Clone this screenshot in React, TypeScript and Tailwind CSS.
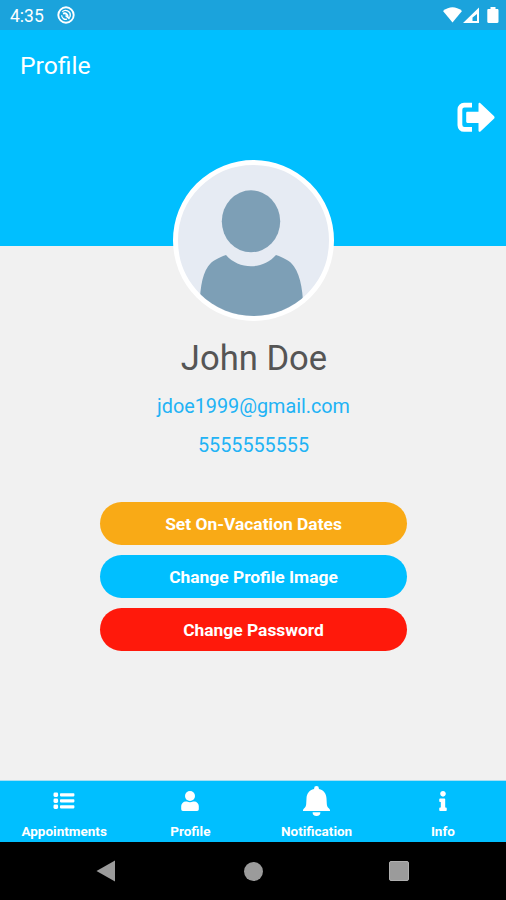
import React from 'react';
import { FaInfo } from 'react-icons/fa';

const ListIcon = () => (
  <svg width="22" height="18" viewBox="0 0 22 18" fill="currentColor">
    {[0.6, 6.6, 12.6].map((y) => (
      <g key={y}>
        <rect x="0.5" y={y} width="4.6" height="4.4" rx="1.4" />
        <rect x="7" y={y + 0.6} width="14.4" height="3.2" rx="0.8" />
      </g>
    ))}
  </svg>
);

const UserIcon = () => (
  <svg width="18" height="20" viewBox="0 0 18 20" fill="currentColor">
    <circle cx="9" cy="5" r="5" />
    <path d="M4.700 10.600h1.200a7 7 0 0 0 6.200 0h1.200a4.500 4.500 0 0 1 4.500 4.500v3.200A1.700 1.700 0 0 1 16.100 20H1.900A1.700 1.700 0 0 1 .2 18.300v-3.200a4.500 4.500 0 0 1 4.500-4.500z" />
  </svg>
);

const BellIcon = () => (
  <svg width="27" height="30" viewBox="0 0 27 30" fill="currentColor">
    <path d="M13.5 0a2.4 2.4 0 0 0-2.4 2.400v.6C6 4.200 3.700 8 3.500 12.500L3.200 18c-.1 2-.8 3.200-2 4.200C.5 22.800 0 23.400 0 24.200V25h27v-.8c0-.8-.5-1.400-1.200-2-1.200-1-1.900-2.200-2-4.200l-.3-5.500C23.300 8 21 4.200 15.900 3v-.6A2.400 2.400 0 0 0 13.500 0z" />
    <path d="M9.600 26.200h7.800a3.900 3.800 0 0 1-7.800 0z" />
  </svg>
);

const tabs = [
  { label: 'Appointments', icon: <ListIcon /> },
  { label: 'Profile', icon: <UserIcon /> },
  { label: 'Notification', icon: <BellIcon /> },
  { label: 'Info', icon: <FaInfo size={20} /> },
];

const StatusBar = () => (
  <div className="flex h-[30px] items-center justify-between bg-[#1ba3dc] pl-[10px] pr-[7px] text-white">
    <div className="flex items-center gap-[13px] pt-0.5">
      <span className="text-[17.5px] leading-5">4:35</span>
      <svg className="mb-0.5" width="18" height="18" viewBox="0 0 18 18" fill="none" stroke="currentColor">
        <circle cx="9" cy="9" r="7.700" strokeWidth="1.900" />
        <path d="M5.300 5.800c3-2.800 8.400-.7 8 3.700-.1 1-.5 1.700-1 2.200" strokeWidth="1.300" />
        <path d="M4.600 9.300c.2 3 2.700 4.500 5.400 3.900" strokeWidth="1.300" />
        <path d="M6 7.600c2.700-1.100 5 .7 4.800 4" strokeWidth="1.800" />
        <path d="M8.500 9.500l4 3.400" strokeWidth="1.500" />
      </svg>
    </div>
    <svg width="56" height="18" viewBox="0 0 56 18" fill="currentColor">
      <path d="M0 5Q9.500-2.500 19 5L9.500 16.500z" />
      <path fillRule="evenodd" d="M36 1.500v15.500H20zM34 8L29.500 11.500V15h4.500z" />
      <path d="M45.500 3h2V1h5v2h1.800c.7 0 1.200.5 1.200 1.200v11.600c0 .7-.5 1.200-1.200 1.200h-8.800c-.7 0-1.200-.5-1.200-1.200V4.200c0-.7.5-1.200 1.200-1.200z" />
    </svg>
  </div>
);

const Avatar = () => (
  <div className="h-[161px] w-[161px] overflow-hidden rounded-full border-[5px] border-white bg-[#e6ebf3]">
    <svg width="151" height="151" viewBox="0 0 151 151" fill="#7d9fb6">
      <ellipse cx="73" cy="56.300" rx="29.200" ry="31" />
      <path d="M21.500 151c0-25 2-40 8.500-49.500 4-6 10-8.500 18-11.500 13 15 37 15 50 0 8 3 14 5.500 18 11.500 7 10 9.500 27 9.500 49.500z" />
    </svg>
  </div>
);

export default function App() {
  return (
    <div className="flex h-[900px] w-[506px] flex-col overflow-hidden bg-[#f1f1f1] font-['Roboto',sans-serif]">
      <StatusBar />

      <header className="h-[216px] shrink-0 bg-[#00bfff] text-white">
        <h1 className="pl-5 pt-[21px] text-[24.7px] leading-[30px]">Profile</h1>
        <div className="flex justify-end pr-[11px] pt-[21px]">
          <button type="button" aria-label="Log out">
            <svg className="block" width="38" height="31" viewBox="0 0 38 31" fill="currentColor">
              <path d="M15 .800H7A6.500 6.500 0 0 0 .500 7.300v16A6.500 6.500 0 0 0 7 29.800h8v-4.800H7.500A2.200 2.200 0 0 1 5.300 22.800V7.800a2.200 2.200 0 0 1 2.200-2.200H15z" />
              <path d="M10.500 9.700h11V2.300c0-1.500 1.200-1.900 2.200-.9l13.200 12.500c.9.900.9 2 0 2.800L23.700 29.300c-1 1-2.200.5-2.200-.9v-7.500h-11c-.8 0-1.300-.5-1.300-1.300V11c0-.8.5-1.300 1.300-1.300z" />
            </svg>
          </button>
        </div>
      </header>

      <main className="flex grow flex-col items-center">
        <div className="-mt-[86px] pl-px">
          <Avatar />
        </div>
        <h2 className="mt-4 pl-0.5 text-[34.6px] leading-[42px] text-[#555555]">John Doe</h2>
        <p className="mt-4 pl-px text-[19.8px] leading-6 text-[#22b3f5]">jdoe1999@gmail.com</p>
        <p className="mt-[15px] pl-px text-[19.8px] leading-6 text-[#22b3f5]">5555555555</p>

        <div className="mt-11 flex w-[307px] flex-col gap-[10px] text-[17.4px] font-bold text-white">
          <button type="button" className="h-[43px] rounded-full bg-[#f9aa16] pl-px pt-0.5">Set On-Vacation Dates</button>
          <button type="button" className="h-[43px] rounded-full bg-[#00bfff] pl-px pt-0.5">Change Profile Image</button>
          <button type="button" className="h-[43px] rounded-full bg-[#ff190b] pl-px pt-0.5">Change Password</button>
        </div>
      </main>

      {/* Bottom tabs */}
      <nav className="grid h-[62px] shrink-0 grid-cols-4 border-t border-[#a5dff4] bg-[#00bfff] pl-px text-white">
        {tabs.map((tab) => (
          <div key={tab.label} className="flex flex-col items-center">
            <div className="flex h-[40px] items-center justify-center">{tab.icon}</div>
            <span className="text-[13.5px] font-bold leading-[21px]">{tab.label}</span>
          </div>
        ))}
      </nav>

      {/* Android navigation */}
      <div className="flex h-[58px] shrink-0 items-center justify-between bg-black pl-[96px] pr-[97px] text-[#9b9b9b]">
        <svg width="20" height="22" viewBox="0 0 20 22" fill="currentColor">
          <path d="M19 .5v21L.5 11z" />
        </svg>
        <div className="ml-0.5 h-[19px] w-[19px] rounded-full bg-[#9b9b9b]" />
        <div className="h-[20px] w-[20px] rounded-[2px] border border-[#b0b0b0] bg-[#9b9b9b]" />
      </div>
    </div>
  );
}
